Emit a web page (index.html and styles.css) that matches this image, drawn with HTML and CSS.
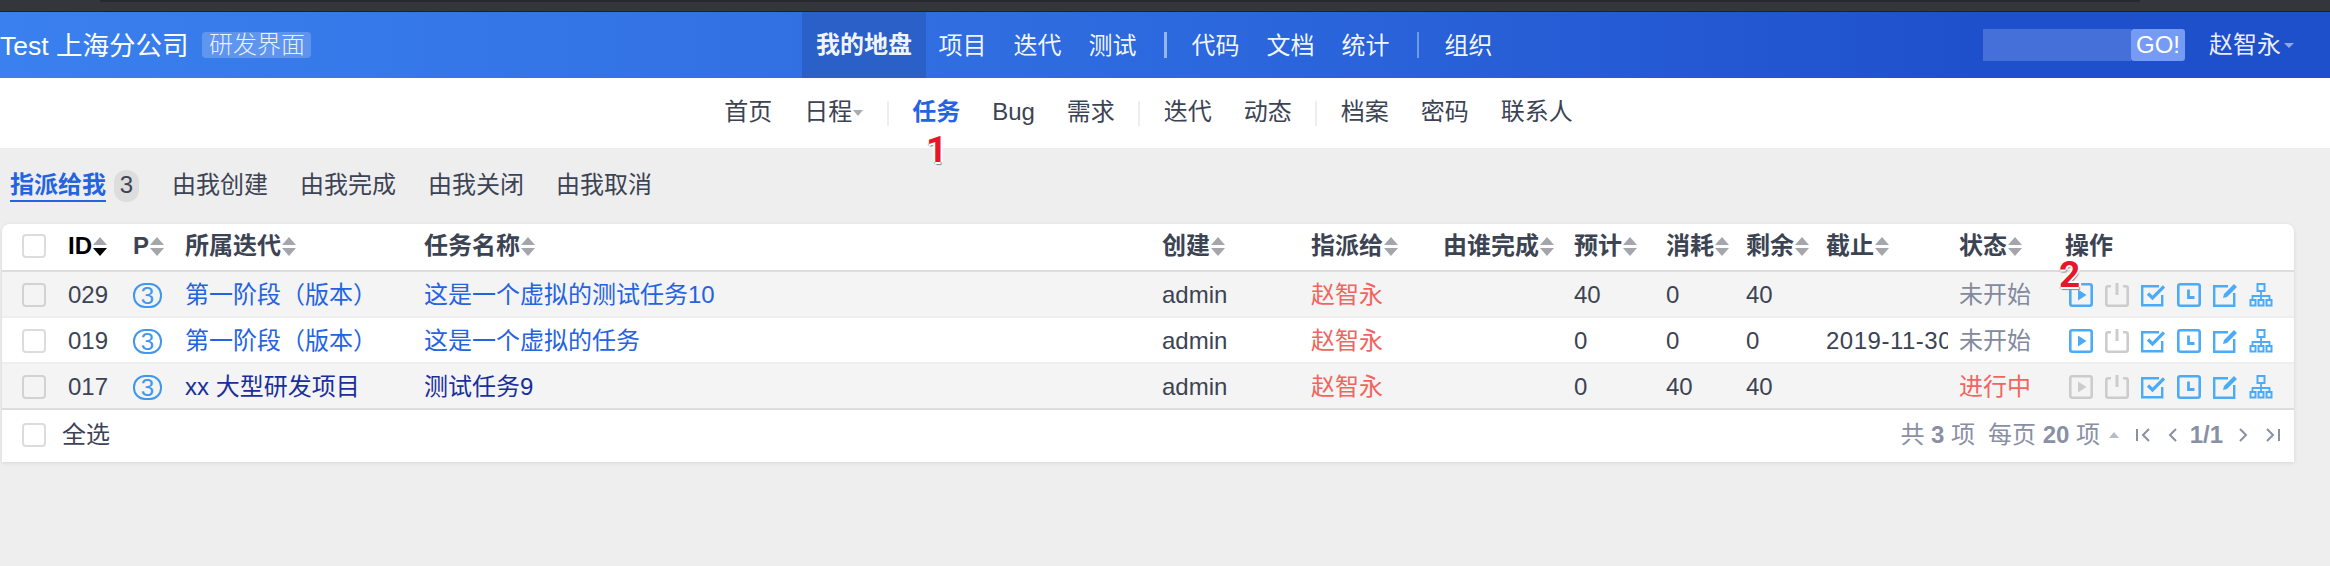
FILE: index.html
```html
<!DOCTYPE html>
<html lang="zh-CN">
  <head>
    <meta charset="UTF-8" />
    <title>我的地盘::任务</title>
    <link rel="stylesheet" href="styles.css">
  </head>
  <body>
    <svg class="icon-defs" width="0" height="0">
      <symbol id="i-play" viewBox="0 0 24 24">
        <rect x="1.3" y="1.3" width="21.4" height="21.4" rx="2" fill="none" stroke="currentColor" stroke-width="2.6" />
        <polygon points="9,6.5 17.5,12 9,17.5" fill="currentColor" />
      </symbol>
      <symbol id="i-power" viewBox="0 0 24 24">
        <path d="M6 3.3H3.3a2 2 0 0 0-2 2v15.4a2 2 0 0 0 2 2h17.4a2 2 0 0 0 2-2V5.3a2 2 0 0 0-2-2H18" fill="none" stroke="currentColor" stroke-width="2.6" />
        <path d="M12 0v12" fill="none" stroke="currentColor" stroke-width="3" />
      </symbol>
      <symbol id="i-check" viewBox="0 0 24 24">
        <path d="M18 3.2H1.2v19h20V12" fill="none" stroke="currentColor" stroke-width="2.4" />
        <path d="M7 10.5l4.5 4.5L23 3.5" fill="none" stroke="currentColor" stroke-width="3.2" />
      </symbol>
      <symbol id="i-clock" viewBox="0 0 24 24">
        <rect x="1.3" y="1.3" width="21.4" height="21.4" rx="2" fill="none" stroke="currentColor" stroke-width="2.6" />
        <path d="M11.5 6.5v8h6" fill="none" stroke="currentColor" stroke-width="2.8" />
      </symbol>
      <symbol id="i-edit" viewBox="0 0 24 24">
        <path d="M15 3.2H1.2v19.6h20V10" fill="none" stroke="currentColor" stroke-width="2.4" />
        <path d="M10 15l1-4L21 1l3 3-10 10z" fill="currentColor" />
      </symbol>
      <symbol id="i-tree" viewBox="0 0 24 24">
        <rect x="8.5" y="1" width="7" height="7" fill="none" stroke="currentColor" stroke-width="2" />
        <path d="M12 8v5M3.5 17v-4h17v4M12 13v4" fill="none" stroke="currentColor" stroke-width="1.8" />
        <rect x="1.5" y="17" width="5" height="5.5" fill="none" stroke="currentColor" stroke-width="2" />
        <rect x="9.5" y="17" width="5" height="5.5" fill="none" stroke="currentColor" stroke-width="2" />
        <rect x="17.5" y="17" width="5" height="5.5" fill="none" stroke="currentColor" stroke-width="2" />
      </symbol>
    </svg>

    <div class="chrome"><div class="chrome-tab"></div></div>

    <header class="top-bar">
      <div class="brand">
        <span class="brand-name">Test 上海分公司</span>
        <span class="brand-tag">研发界面</span>
      </div>
      <nav class="main-nav">
        <a class="main-nav-item active">我的地盘</a>
        <a class="main-nav-item">项目</a>
        <a class="main-nav-item">迭代</a>
        <a class="main-nav-item">测试</a>
        <span class="main-nav-sep thick"></span>
        <a class="main-nav-item">代码</a>
        <a class="main-nav-item">文档</a>
        <a class="main-nav-item">统计</a>
        <span class="main-nav-sep"></span>
        <a class="main-nav-item">组织</a>
      </nav>
      <div class="top-right">
        <div class="search">
          <input class="search-input" type="text" />
          <button class="search-go">GO!</button>
        </div>
        <span class="user">赵智永<i class="caret"></i></span>
      </div>
    </header>

    <nav class="sub-nav">
      <a class="sub-nav-item">首页</a>
      <a class="sub-nav-item">日程<i class="caret-gray"></i></a>
      <span class="sub-nav-sep"></span>
      <a class="sub-nav-item active">任务</a>
      <a class="sub-nav-item">Bug</a>
      <a class="sub-nav-item">需求</a>
      <span class="sub-nav-sep"></span>
      <a class="sub-nav-item">迭代</a>
      <a class="sub-nav-item">动态</a>
      <span class="sub-nav-sep"></span>
      <a class="sub-nav-item">档案</a>
      <a class="sub-nav-item">密码</a>
      <a class="sub-nav-item">联系人</a>
    </nav>

    <main class="main-content">
      <div class="tabs">
        <a class="tab active">指派给我</a>
        <span class="tab-count">3</span>
        <a class="tab">由我创建</a>
        <a class="tab">由我完成</a>
        <a class="tab">由我关闭</a>
        <a class="tab">由我取消</a>
      </div>

      <div class="card">
        <table class="task-table">
          <colgroup>
            <col class="w-check" /><col class="w-id" /><col class="w-pri" /><col class="w-iter" />
            <col class="w-name" /><col class="w-creator" /><col class="w-assign" /><col class="w-done" />
            <col class="w-est" /><col class="w-used" /><col class="w-left" /><col class="w-date" />
            <col class="w-status" /><col class="w-ops" />
          </colgroup>
          <thead>
            <tr>
              <th class="cell-check"><span class="checkbox"></span></th>
              <th class="sorted">ID<i class="sort desc"></i></th>
              <th>P<i class="sort"></i></th>
              <th>所属迭代<i class="sort"></i></th>
              <th>任务名称<i class="sort"></i></th>
              <th>创建<i class="sort"></i></th>
              <th>指派给<i class="sort"></i></th>
              <th>由谁完成<i class="sort"></i></th>
              <th>预计<i class="sort"></i></th>
              <th>消耗<i class="sort"></i></th>
              <th>剩余<i class="sort"></i></th>
              <th>截止<i class="sort"></i></th>
              <th class="cell-status">状态<i class="sort"></i></th>
              <th>操作</th>
            </tr>
          </thead>
          <tbody>
            <tr class="odd">
              <td class="cell-check"><span class="checkbox"></span></td>
              <td>029</td>
              <td><span class="pri">3</span></td>
              <td><a class="link">第一阶段（版本）</a></td>
              <td><a class="link">这是一个虚拟的测试任务10</a></td>
              <td>admin</td>
              <td class="red">赵智永</td>
              <td></td>
              <td>40</td>
              <td>0</td>
              <td>40</td>
              <td></td>
              <td class="cell-status gray">未开始</td>
              <td>
                <div class="ops">
                  <svg class="op on"><use href="#i-play" /></svg>
                  <svg class="op off"><use href="#i-power" /></svg>
                  <svg class="op on"><use href="#i-check" /></svg>
                  <svg class="op on"><use href="#i-clock" /></svg>
                  <svg class="op on"><use href="#i-edit" /></svg>
                  <svg class="op on"><use href="#i-tree" /></svg>
                </div>
              </td>
            </tr>
            <tr>
              <td class="cell-check"><span class="checkbox"></span></td>
              <td>019</td>
              <td><span class="pri">3</span></td>
              <td><a class="link">第一阶段（版本）</a></td>
              <td><a class="link">这是一个虚拟的任务</a></td>
              <td>admin</td>
              <td class="red">赵智永</td>
              <td></td>
              <td>0</td>
              <td>0</td>
              <td>0</td>
              <td class="cell-date">2019-11-30</td>
              <td class="cell-status gray">未开始</td>
              <td>
                <div class="ops">
                  <svg class="op on"><use href="#i-play" /></svg>
                  <svg class="op off"><use href="#i-power" /></svg>
                  <svg class="op on"><use href="#i-check" /></svg>
                  <svg class="op on"><use href="#i-clock" /></svg>
                  <svg class="op on"><use href="#i-edit" /></svg>
                  <svg class="op on"><use href="#i-tree" /></svg>
                </div>
              </td>
            </tr>
            <tr class="odd last">
              <td class="cell-check"><span class="checkbox"></span></td>
              <td>017</td>
              <td><span class="pri">3</span></td>
              <td><a class="link visited">xx 大型研发项目</a></td>
              <td><a class="link visited">测试任务9</a></td>
              <td>admin</td>
              <td class="red">赵智永</td>
              <td></td>
              <td>0</td>
              <td>40</td>
              <td>40</td>
              <td></td>
              <td class="cell-status red">进行中</td>
              <td>
                <div class="ops">
                  <svg class="op off"><use href="#i-play" /></svg>
                  <svg class="op off"><use href="#i-power" /></svg>
                  <svg class="op on"><use href="#i-check" /></svg>
                  <svg class="op on"><use href="#i-clock" /></svg>
                  <svg class="op on"><use href="#i-edit" /></svg>
                  <svg class="op on"><use href="#i-tree" /></svg>
                </div>
              </td>
            </tr>
          </tbody>
        </table>

        <div class="table-footer">
          <label class="select-all"><span class="checkbox"></span>全选</label>
          <div class="pager">
            <span>共 <b>3</b> 项</span>
            <span class="per-page">每页 <b>20</b> 项</span>
            <i class="caret-up"></i>
            <svg class="page-btn first" viewBox="0 0 14 14"><path d="M1 1v12M13 1L7 7l6 6" /></svg>
            <svg class="page-btn prev" viewBox="0 0 9 14"><path d="M8 1L2 7l6 6" /></svg>
            <b class="page-num">1/1</b>
            <svg class="page-btn next" viewBox="0 0 9 14"><path d="M1 1l6 6-6 6" /></svg>
            <svg class="page-btn last" viewBox="0 0 14 14"><path d="M1 1l6 6-6 6M13 1v12" /></svg>
          </div>
        </div>

        <span class="mark mark-1">1</span>
        <span class="mark mark-2">2</span>
      </div>
    </main>
  </body>
</html>
```
FILE: styles.css
```css
* {
  box-sizing: border-box;
}

html,
body {
  margin: 0;
  height: 100%;
}

body {
  background-color: #eeeeee;
  color: #3c4353;
  font-family: "Liberation Sans", "Noto Sans CJK SC", sans-serif;
  font-size: 24px;
  line-height: 32px;
  overflow: hidden;
}

.icon-defs {
  position: absolute;
}

.chrome {
  height: 12px;
  background-color: #33363a;
  border-bottom: 1px solid #1f2225;
}

.chrome-tab {
  width: 2040px;
  height: 2px;
  margin-left: 100px;
  background-color: #27292c;
}

/* top bar */
.top-bar {
  height: 66px;
  display: flex;
  align-items: center;
  color: white;
  background: linear-gradient(90deg, #3a80ee 0%, #2d69de 50%, #1f50cc 85%, #1f50cc 100%);
}

.brand {
  width: 802px;
  display: flex;
  align-items: center;
  flex-shrink: 0;
}

.brand-name {
  font-size: 26.5px;
  padding-top: 2px;
  margin-right: 14px;
}

.brand-tag {
  height: 26px;
  line-height: 26px;
  padding: 0 6.5px;
  border-radius: 4px;
  background-color: rgba(255, 255, 255, 0.2);
  color: rgba(255, 255, 255, 0.88);
  font-weight: 300;
}

.main-nav {
  display: flex;
  align-items: center;
  height: 100%;
}

.main-nav-item {
  padding: 2px 13.5px 0;
  color: rgba(255, 255, 255, 0.95);
}

.main-nav-item.active {
  height: 100%;
  line-height: 66px;
  padding: 0 14px;
  margin-right: -1px;
  font-weight: 700;
  background-color: #2b60c8;
}

.main-nav-sep {
  width: 2px;
  height: 26px;
  margin: 0 12px 0 14px;
  background-color: rgba(255, 255, 255, 0.35);
}

.main-nav-sep.thick {
  width: 3px;
  margin-right: 11px;
  background-color: rgba(255, 255, 255, 0.5);
}

.top-right {
  display: flex;
  align-items: center;
  margin-left: auto;
  padding-right: 36px;
}

.search {
  display: flex;
  height: 32px;
}

.search-input {
  width: 148px;
  height: 32px;
  border: none;
  outline: none;
  background-color: #4570da;
}

.search-go {
  width: 54px;
  height: 32px;
  padding: 0;
  border: none;
  border-radius: 3px;
  background-color: #769bf5;
  color: white;
  font-family: inherit;
  font-size: 24px;
}

.user {
  display: flex;
  align-items: center;
  margin-left: 24px;
  color: rgba(255, 255, 255, 0.92);
}

.caret {
  width: 0;
  height: 0;
  margin-left: 3px;
  border-left: 5px solid transparent;
  border-right: 5px solid transparent;
  border-top: 5px solid rgba(255, 255, 255, 0.5);
}

/* second nav */
.sub-nav {
  height: 70px;
  display: flex;
  align-items: center;
  justify-content: center;
  padding-right: 33px;
  background-color: white;
}

.sub-nav-item {
  display: flex;
  align-items: center;
  padding: 0 16px 2px;
}

.sub-nav-item.active {
  color: #2463e2;
  font-weight: 700;
}

.sub-nav-sep {
  width: 2px;
  height: 25px;
  margin: 0 7.5px;
  background-color: #eeeeee;
}

.caret-gray {
  width: 0;
  height: 0;
  margin: 2px 0 0 1px;
  border-left: 5px solid transparent;
  border-right: 5px solid transparent;
  border-top: 6px solid #a9abb1;
}

/* tabs */
.main-content {
  position: relative;
  padding: 22px 0 0 2px;
}

.tabs {
  display: flex;
  align-items: center;
  height: 32px;
  padding-left: 8px;
  margin-bottom: 22px;
  line-height: 30px;
}

.tab {
  margin-right: 32px;
  padding-bottom: 2px;
}

.tab.active {
  height: 32px;
  margin-right: 8px;
  padding-bottom: 0;
  color: #2463e2;
  font-weight: 700;
  border-bottom: 2px solid #2463e2;
}

.tab-count {
  width: 25px;
  height: 32px;
  margin-right: 33px;
  border-radius: 12px;
  text-align: center;
  background-color: #dddddd;
}

/* table */
.card {
  width: 2292px;
  background-color: white;
  border-radius: 8px 8px 0 0;
  box-shadow: 0 1px 4px rgba(0, 0, 0, 0.1);
}

.task-table {
  width: 100%;
  table-layout: fixed;
  border-collapse: separate;
  border-spacing: 0;
}

.w-check { width: 58px; }
.w-id { width: 65px; }
.w-pri { width: 52px; }
.w-iter { width: 239px; }
.w-name { width: 738px; }
.w-creator { width: 149px; }
.w-assign { width: 132px; }
.w-done { width: 131px; }
.w-est { width: 92px; }
.w-used { width: 80px; }
.w-left { width: 80px; }
.w-date { width: 130px; }
.w-status { width: 109px; }

.task-table th,
.task-table td {
  padding: 0 0 0 8px;
  white-space: nowrap;
  overflow: hidden;
  text-align: left;
  vertical-align: middle;
}

.task-table th {
  height: 48px;
  padding-bottom: 2px;
  font-weight: 700;
  border-bottom: 2px solid #dddddd;
}

.task-table td {
  height: 46px;
  padding-top: 2px;
  border-bottom: 2px solid #eeeeee;
}

.task-table .cell-check {
  padding-left: 20px;
}

.task-table .cell-status {
  padding-left: 11px;
}

.task-table .cell-date {
  letter-spacing: 0.5px;
}

.task-table tr.odd td {
  background-color: #f4f4f4;
}

.task-table tr.last td {
  border-bottom-color: #dddddd;
}

.sorted {
  color: black;
}

.checkbox {
  display: block;
  width: 24px;
  height: 24px;
  border: 2px solid #dcdcdc;
  border-radius: 4px;
  background-color: white;
}

tr.odd .checkbox {
  border-color: #d2d2d2;
  background-color: transparent;
}

.sort {
  display: inline-block;
  width: 15px;
  height: 19px;
  margin-left: 1px;
  vertical-align: -2px;
  position: relative;
}

.sort::before,
.sort::after {
  content: "";
  position: absolute;
  left: 0;
  border-left: 7.5px solid transparent;
  border-right: 7.5px solid transparent;
}

.sort::before {
  top: 0;
  border-bottom: 8px solid #a4a6ac;
}

.sort::after {
  bottom: 0;
  border-top: 8px solid #a4a6ac;
}

.sort.desc::after {
  border-top-color: black;
}

.pri {
  display: block;
  width: 29px;
  height: 25px;
  line-height: 21px;
  border: 2px solid #3f97ee;
  border-radius: 12px;
  text-align: center;
  color: #3f97ee;
}

.link {
  color: #2463e2;
}

.link.visited {
  color: #1a2f9c;
}

.red {
  color: #f1645f;
}

.gray {
  color: #838a9d;
}

.ops {
  display: flex;
  align-items: center;
  gap: 12px;
  margin-left: 4px;
}

.op {
  width: 24px;
  height: 24px;
  flex-shrink: 0;
}

.op.on {
  color: #4cabf8;
}

.op.off {
  color: #cccccc;
}

/* footer */
.table-footer {
  height: 52px;
  display: flex;
  align-items: center;
  justify-content: space-between;
  padding: 0 14px 2px 20px;
}

.select-all {
  display: flex;
  align-items: center;
  gap: 16px;
}

.pager {
  display: flex;
  align-items: center;
  color: #8a90a4;
}

.per-page {
  margin-left: 13px;
}

.caret-up {
  width: 0;
  height: 0;
  margin: 0 17px 0 9px;
  border-left: 5px solid transparent;
  border-right: 5px solid transparent;
  border-bottom: 6px solid #b9bcc7;
}

.page-btn {
  height: 14px;
  fill: none;
  stroke: #8a90a4;
  stroke-width: 2;
}

.page-btn.first,
.page-btn.last {
  width: 14px;
}

.page-btn.prev,
.page-btn.next {
  width: 9px;
}

.page-btn.prev {
  margin-left: 18px;
}

.page-num {
  margin: 0 16px 0 12.5px;
}

.page-btn.last {
  margin-left: 18px;
}

/* numbered marks drawn over the screenshot */
.mark {
  position: absolute;
  font-family: Roboto, sans-serif;
  font-size: 37px;
  line-height: 37px;
  font-weight: 700;
  color: #e8162a;
  text-shadow: 2px 0 0 white, -2px 0 0 white, 0 -2px 0 white, 0 2px 0 white, 1px 3px 1px #8a8a8a, -1px 2px 1px #bbbbbb;
}

.mark-1 {
  left: 926px;
  top: -17px;
}

.mark-2 {
  left: 2059px;
  top: 108px;
}
```
